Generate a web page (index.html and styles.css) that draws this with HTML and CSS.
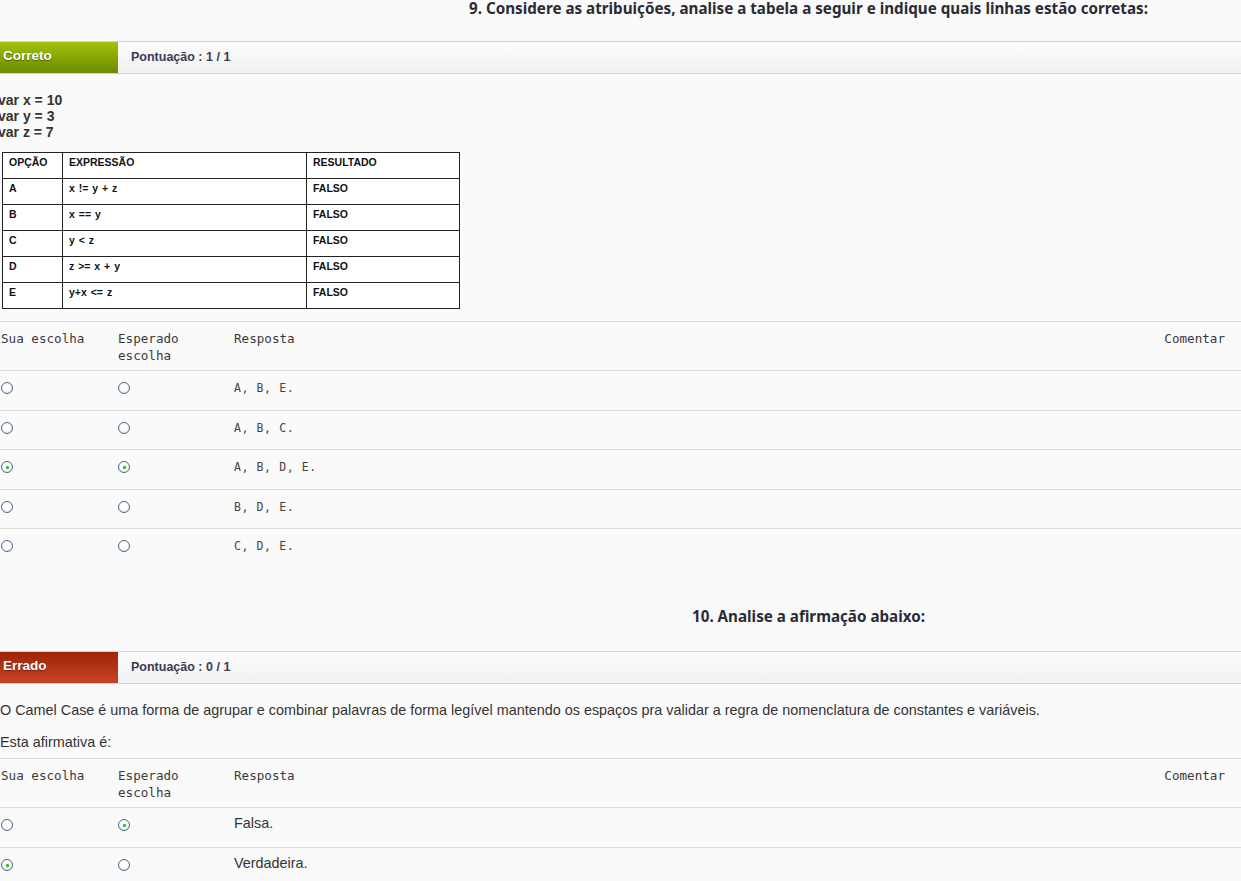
FILE: index.html
```html
<!DOCTYPE html>
<html lang="pt">
<head>
<meta charset="utf-8">
<title>Questões</title>
<link rel="stylesheet" href="styles.css">
</head>
<body>
<section class="question">
  <h2 class="q-title">9. Considere as atribuições, analise a tabela a seguir e indique quais linhas estão corretas:</h2>
  <div class="status-bar">
    <div class="badge ok">Correto</div>
    <div class="score">Pontuação : 1 / 1</div>
  </div>
  <div class="code-lines">
    <div>var x = 10</div>
    <div>var y = 3</div>
    <div>var z = 7</div>
  </div>
  <table class="ops">
    <tr><th class="c1">OPÇÃO</th><th class="c2">EXPRESSÃO</th><th class="c3">RESULTADO</th></tr>
    <tr><td>A</td><td>x != y + z</td><td>FALSO</td></tr>
    <tr><td>B</td><td>x == y</td><td>FALSO</td></tr>
    <tr><td>C</td><td>y &lt; z</td><td>FALSO</td></tr>
    <tr><td>D</td><td>z &gt;= x + y</td><td>FALSO</td></tr>
    <tr><td>E</td><td>y+x &lt;= z</td><td>FALSO</td></tr>
  </table>
  <div class="answers mono-answers">
    <div class="a-head">
      <div class="col1">Sua escolha</div>
      <div class="col2">Esperado<br>escolha</div>
      <div class="col3">Resposta</div>
      <div class="col4">Comentar</div>
    </div>
    <div class="a-row"><div class="col1"><span class="radio"></span></div><div class="col2"><span class="radio"></span></div><div class="col3">A, B, E.</div></div>
    <div class="a-row"><div class="col1"><span class="radio"></span></div><div class="col2"><span class="radio"></span></div><div class="col3">A, B, C.</div></div>
    <div class="a-row"><div class="col1"><span class="radio on"></span></div><div class="col2"><span class="radio on"></span></div><div class="col3">A, B, D, E.</div></div>
    <div class="a-row"><div class="col1"><span class="radio"></span></div><div class="col2"><span class="radio"></span></div><div class="col3">B, D, E.</div></div>
    <div class="a-row last"><div class="col1"><span class="radio"></span></div><div class="col2"><span class="radio"></span></div><div class="col3">C, D, E.</div></div>
  </div>
</section>

<section class="question q10">
  <h2 class="q-title">10. Analise a afirmação abaixo:</h2>
  <div class="status-bar">
    <div class="badge bad">Errado</div>
    <div class="score">Pontuação : 0 / 1</div>
  </div>
  <p class="stmt first">O Camel Case é uma forma de agrupar e combinar palavras de forma legível mantendo os espaços pra validar a regra de nomenclatura de constantes e variáveis.</p>
  <p class="stmt">Esta afirmativa é:</p>
  <div class="answers sans-answers">
    <div class="a-head">
      <div class="col1">Sua escolha</div>
      <div class="col2">Esperado<br>escolha</div>
      <div class="col3">Resposta</div>
      <div class="col4">Comentar</div>
    </div>
    <div class="a-row"><div class="col1"><span class="radio"></span></div><div class="col2"><span class="radio on"></span></div><div class="col3">Falsa.</div></div>
    <div class="a-row"><div class="col1"><span class="radio on"></span></div><div class="col2"><span class="radio"></span></div><div class="col3">Verdadeira.</div></div>
  </div>
</section>
</body>
</html>
```

FILE: styles.css
```css
html, body {
  margin: 0;
  padding: 0;
  background: #fafafa;
  color: #333;
  font-family: "Liberation Sans", Arial, sans-serif;
}

.q-title {
  margin: 0;
  padding: 0 0 0 376px;
  height: 41px;
  text-align: center;
  font-family: "Noto Sans", "Liberation Sans", sans-serif;
  font-size: 15.2px;
  line-height: 16px;
  font-weight: 700;
  color: #2b2b35;
  box-sizing: border-box;
}

.q10 .q-title {
  padding-top: 39px;
  height: 83px;
  line-height: 18px;
}

.status-bar {
  display: flex;
  align-items: stretch;
  height: 31px;
  border-top: 1px solid #d3d3d3;
  border-bottom: 1px solid #d3d3d3;
  background: linear-gradient(#fcfcfc, #f1f1f3);
}

.badge {
  width: 118px;
  padding-left: 3px;
  box-sizing: border-box;
  color: #fff;
  font-weight: 700;
  font-size: 13.5px;
  line-height: 28px;
  text-shadow: 0 1px 1px rgba(0,0,0,0.45);
}
.badge.ok { background: linear-gradient(#a2c20a, #6a8a00); }
.badge.bad { background: linear-gradient(#9e2406, #c8432a); }

.score {
  padding-left: 13px;
  font-size: 12.5px;
  font-weight: 700;
  line-height: 31px;
  color: #3b3b55;
}

.code-lines {
  margin: 18px 0 0 -2px;
  font-size: 14px;
  line-height: 16px;
  font-weight: 700;
  color: #333;
}

.ops {
  margin: 12px 0 0 2px;
  border-collapse: collapse;
  font-family: "Liberation Sans", Arial, sans-serif;
  font-size: 10.5px;
  font-weight: 700;
  color: #111;
  background: #fff;
}
.ops th, .ops td {
  border: 1.5px solid #222;
  height: 26px;
  padding: 2px 0 0 6px;
  text-align: left;
  vertical-align: top;
  line-height: 14px;
  box-sizing: border-box;
}
.ops td:nth-child(2) { word-spacing: 1px; }
.ops .c1 { width: 60px; }
.ops .c2 { width: 244px; }
.ops .c3 { width: 153px; }

.answers { margin-top: 12px; }
.a-head, .a-row {
  display: flex;
  border-top: 1px solid #dcdcdc;
}
.a-head {
  padding: 8px 0 6px;
  font-family: "DejaVu Sans Mono", "Liberation Mono", monospace;
  font-size: 12.6px;
  line-height: 17px;
  color: #3a3a3a;
}
.a-row {
  height: 38.5px;
  align-items: center;
  padding-bottom: 4px;
  box-sizing: content-box;
}
.mono-answers .a-row { height: 34.5px; }
.col1 { width: 117px; padding-left: 1px; box-sizing: border-box; }
.col2 { width: 117px; padding-left: 1px; box-sizing: border-box; }
.col3 { flex: 1; }
.col4 { padding-right: 16px; }

.mono-answers .a-row .col3 {
  font-family: "DejaVu Sans Mono", "Liberation Mono", monospace;
  font-size: 11.5px;
  letter-spacing: 0.6px;
  color: #444;
}
.sans-answers .a-row .col3 {
  font-size: 14.4px;
  color: #333;
  padding-bottom: 4px;
}

.radio {
  display: block;
  width: 12px;
  height: 12px;
  border: 1px solid #4a6a8c;
  border-radius: 50%;
  background: radial-gradient(circle at 50% 40%, #ffffff 40%, #dcdfe4 100%);
  box-sizing: border-box;
  position: relative;
}
.radio.on::after {
  content: "";
  position: absolute;
  left: 3.5px;
  top: 3.5px;
  width: 3px;
  height: 3px;
  border-radius: 50%;
  background: #22c22a;
  box-shadow: 0 0 1px #3c3;
}

.stmt {
  margin: 0;
  font-size: 14.4px;
  line-height: 18px;
  color: #333;
}
.stmt.first { margin-top: 17px; }
.stmt + .stmt { margin-top: 14px; }
.q10 .answers { margin-top: 7px; }
.sans-answers .a-row { height: 35px; }
```
